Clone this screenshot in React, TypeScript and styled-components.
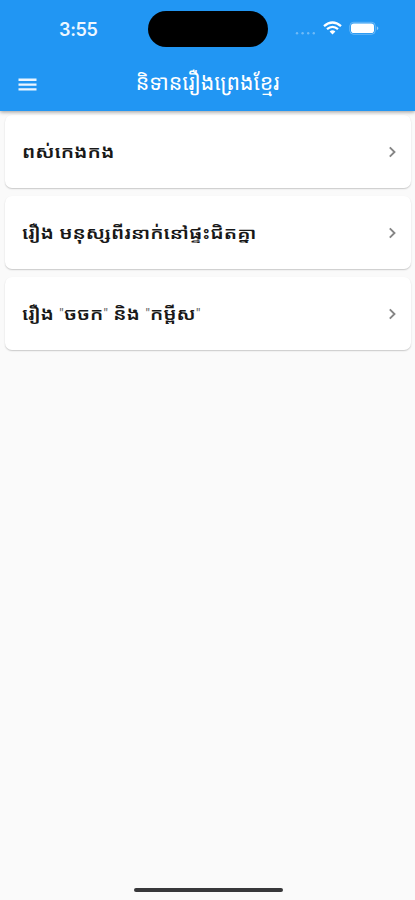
import React from 'react';
import styled, { createGlobalStyle } from 'styled-components';

const Global = createGlobalStyle`
  * { box-sizing: border-box; }
  body { margin: 0; background: #fafafa; font-family: "Noto Sans Khmer", "DejaVu Sans", sans-serif; }
`;

const Screen = styled.div`
  display: flex;
  flex-direction: column;
  height: 900px;
  overflow: hidden;
  background: #fafafa;
`;

const Header = styled.header`
  height: 111px;
  flex: none;
  background: #2196f3;
  color: #fff;
  box-shadow: 0 1px 4px rgba(0, 0, 0, 0.4);
  z-index: 1;
`;

const StatusBar = styled.div`
  display: grid;
  grid-template-columns: 148px 120px 1fr;
  height: 56px;
  padding-top: 11px;
`;

const Clock = styled.div`
  padding: 6px 0 0 59px;
  font: 600 18px/25px Inter, sans-serif;
  letter-spacing: -0.3px;
  color: #eef7ff;
`;

const Island = styled.div`
  height: 36px;
  border-radius: 18px;
  background: #000;
`;

const StatusIcons = styled.svg`
  display: block;
  width: 90px;
  height: 20px;
  margin: 7px 0 0 25px;
`;

const Toolbar = styled.div`
  display: grid;
  grid-template-columns: 55px 1fr 55px;
  align-items: center;
  height: 55px;
`;

const MenuIcon = styled.svg`
  width: 20px;
  height: 14px;
  margin: 2px 0 0 18px;
`;

const Title = styled.h1`
  margin: 0;
  padding-bottom: 3px;
  text-align: center;
  font-size: 21.3px;
  font-weight: 400;
  line-height: 36px;
  white-space: nowrap;
`;

const List = styled.main`
  display: flex;
  flex-direction: column;
  gap: 8px;
  padding: 4px 4px 0 5px;
`;

const Card = styled.article`
  display: flex;
  align-items: center;
  justify-content: space-between;
  height: 73px;
  padding: 0 12px 0 17px;
  border-radius: 7px;
  background: #fff;
  box-shadow: 0 1px 1.5px rgba(0, 0, 0, 0.2);
`;

const Name = styled.span<{ $stretch: number }>`
  color: #181818;
  font-size: 16px;
  font-weight: 600;
  line-height: 30px;
  white-space: nowrap;
  transform: scaleX(${p => p.$stretch});
  transform-origin: left center;
`;

const Quote = styled.span`
  font-family: Roboto, sans-serif;
  font-size: 12px;
  font-weight: 400;
  vertical-align: 2px;
  color: #666;
`;

const Chevron = styled.svg`
  width: 14px;
  height: 14px;
`;

const HomeBar = styled.div`
  width: 149px;
  height: 4px;
  margin: auto auto 8px 134px;
  border-radius: 2px;
  background: #38383a;
`;

const stories: { name: React.ReactNode; stretch: number }[] = [
  { name: 'ពស់កេងកង', stretch: 1.26 },
  { name: 'រឿង មនុស្សពីរនាក់នៅផ្ទះជិតគ្នា', stretch: 1.255 },
  {
    name: <>រឿង <Quote>"</Quote>ចចក<Quote>"</Quote> និង <Quote>"</Quote>កម្ពីស<Quote>"</Quote></>,
    stretch: 1.25,
  },
];

export default function App() {
  return (
    <Screen>
      <Global />
      <Header>
        <StatusBar>
          <Clock>3:55</Clock>
          <Island />
          <StatusIcons viewBox="0 0 90 20">
            <g fill="#fff" opacity="0.35">
              <circle cx="4" cy="15.3" r="1.2" />
              <circle cx="9.6" cy="15.3" r="1.2" />
              <circle cx="15.2" cy="15.3" r="1.2" />
              <circle cx="20.8" cy="15.3" r="1.2" />
            </g>
            <g fill="none" stroke="#fff" strokeWidth="2.3">
              <path d="M31 8.2 Q39.5 0.8 48 8.2" />
              <path d="M34 11.2 Q39.5 6.6 45 11.2" />
            </g>
            <path d="M36.6 13.4 Q39.5 11 42.4 13.4 L39.5 16.6 Z" fill="#fff" />
            <rect x="56.8" y="4.3" width="25.5" height="12" rx="3.8" fill="none" stroke="#fff" strokeOpacity="0.32" />
            <rect x="58" y="5.5" width="23" height="9.6" rx="2.8" fill="#fff" />
            <path d="M83.8 8.3 Q87 10.3 83.8 12.3 Z" fill="#fff" opacity="0.5" />
          </StatusIcons>
        </StatusBar>
        <Toolbar>
          <MenuIcon viewBox="0 0 20 14">
            <path d="M0.5 1.8H18.5M0.5 6.6H18.5M0.5 11.4H18.5" stroke="#eaf5ff" strokeWidth="2.4" />
          </MenuIcon>
          <Title>និទានរឿងព្រេងខ្មែរ</Title>
        </Toolbar>
      </Header>
      <List>
        {stories.map((story, i) => (
          <Card key={i}>
            <Name $stretch={story.stretch}>{story.name}</Name>
            <Chevron viewBox="0 0 14 14">
              <path d="M4.8 2.3L9.5 7L4.8 11.7" fill="none" stroke="#858585" strokeWidth="1.9" />
            </Chevron>
          </Card>
        ))}
      </List>
      <HomeBar />
    </Screen>
  );
}
